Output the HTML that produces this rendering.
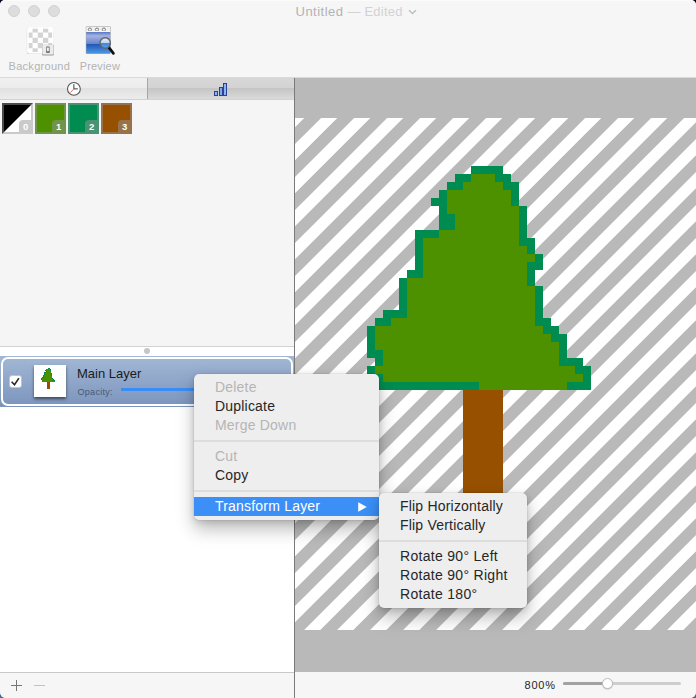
<!DOCTYPE html>
<html lang="en">
<head>
<meta charset="utf-8">
<title>Untitled — Edited</title>
<style>
html,body{margin:0;padding:0;}
body{width:696px;height:698px;overflow:hidden;position:relative;background:linear-gradient(#05051e 0,#05051e 50%,#3f6fa5 50%,#3f6fa5 100%);font-family:"Liberation Sans",Arial,sans-serif;}
#win{position:absolute;left:0;top:0;width:696px;height:698px;background:#f6f6f6;border-radius:5px 5px 6px 6px;overflow:hidden;}
.abs{position:absolute;}
#titlebar{left:0;top:0;width:696px;height:77px;background:linear-gradient(#fbfbfb 0,#fbfbfb 1px,#f6f6f6 1px,#f6f6f6 100%);}
.tl{position:absolute;top:5px;width:12px;height:12px;border-radius:50%;background:#dddddd;border:1px solid #d0d0d0;box-sizing:border-box;}
#title{left:295.5px;top:3.5px;width:200px;height:16px;text-align:left;font-size:13px;line-height:16px;color:#b4b2b4;letter-spacing:0.22px;white-space:nowrap;}
#title .ed{color:#d2d2d2;}
.tblabel{position:absolute;top:59px;font-size:11px;line-height:14px;color:#b3b3b3;letter-spacing:0.3px;white-space:nowrap;}
#tbline{left:0;top:77px;width:696px;height:1px;background:#dadada;}
/* left panel */
#tab1{left:0;top:78px;width:147px;height:21px;background:linear-gradient(#f0f0f0 0,#ececec 48%,#e1e1e1 50%,#ececec 100%);}
#tab2{left:148px;top:78px;width:146px;height:21px;background:linear-gradient(#d7d7d7 0,#d3d3d3 48%,#c5c5c5 50%,#dadada 100%);}
#tabsep{left:147px;top:78px;width:1px;height:21px;background:#a6a6a6;}
#tabline{left:0;top:99px;width:294px;height:1px;background:#d2d2d2;}
#palette{left:0;top:100px;width:294px;height:246px;background:#f5f5f5;}
#palline{left:0;top:346px;width:294px;height:1px;background:#d2d2d2;}
#splitter{left:0;top:347px;width:294px;height:9px;background:#ffffff;}
#splitdot{left:144px;top:348px;width:6px;height:6px;border-radius:50%;background:#c6c6c6;}
.sw{position:absolute;top:103px;width:31px;height:31px;box-sizing:border-box;box-shadow:inset 0 0 0 2px rgba(150,150,150,0.5);overflow:hidden;}
.sw .bd{position:absolute;right:2px;bottom:2px;width:12px;height:12px;background:rgba(150,150,150,0.5);border-top-left-radius:4px;color:#fff;font-size:9.5px;font-weight:bold;line-height:13px;text-align:center;text-indent:1.5px;overflow:visible;white-space:nowrap;}
#layerrow{left:0;top:356px;width:294px;height:51px;background:linear-gradient(#a3b8d6,#7b94bc);}
#ring{left:1px;top:1px;width:292px;height:49px;box-sizing:border-box;border:2px solid #fff;border-radius:7px;}
#chk{left:8.5px;top:18.5px;width:13px;height:13px;box-sizing:border-box;background:#fff;border:1px solid #c9c3bb;border-radius:3px;}
#thumb{left:34px;top:9px;width:32px;height:32px;background:#fff;box-shadow:0 2px 3px rgba(0,0,0,0.55);}
#lname{left:77px;top:10px;font-size:13px;line-height:16px;color:#1b1b1b;white-space:nowrap;letter-spacing:0px;}
#lop{left:77.5px;top:29.7px;font-size:9px;line-height:12px;color:#4a5872;white-space:nowrap;letter-spacing:0.3px;}
#lslider{left:121px;top:32px;width:173px;height:3px;background:#3b8df6;}
#list{left:0;top:407px;width:294px;height:265px;background:#fff;}
#botline{left:0;top:672px;width:294px;height:1px;background:#c9c9c9;}
#botbar{left:0;top:673px;width:696px;height:25px;background:#f6f6f6;}
#divider{left:294px;top:78px;width:1px;height:620px;background:#7a7a7a;}
#scroll{left:295px;top:78px;width:401px;height:594px;background:#b9b9b9;overflow:hidden;}
#zoomtxt{left:524.5px;top:677.5px;font-size:11px;line-height:14px;color:#1e1e1e;letter-spacing:0.8px;white-space:nowrap;}
#track{left:563px;top:682px;width:118px;height:3px;border-radius:1.5px;background:#cecece;}
#trackf{left:563px;top:682px;width:44px;height:3px;border-radius:1.5px;background:#a2a2a2;}
#knob{left:601.5px;top:678px;width:11px;height:11px;border-radius:50%;background:#fff;border:1px solid #bdbdbd;box-sizing:border-box;box-shadow:0 0.5px 1px rgba(0,0,0,0.2);}
/* menus */
.menu{position:absolute;background:#eeeeee;border-radius:5px;box-shadow:0 0 0 0.5px rgba(0,0,0,0.08),0 9px 18px rgba(0,0,0,0.27),0 2px 6px rgba(0,0,0,0.12);padding:4px 0;box-sizing:border-box;font-size:14px;letter-spacing:0.2px;color:#262626;}
.mi{height:19px;line-height:19px;padding-left:21px;white-space:nowrap;position:relative;}
.mi.dis{color:#b5b5b5;}
.mi.rot{letter-spacing:0.3px;}
.mi.hl{background:#3b8ff6;color:#fff;}
.msep{height:12px;position:relative;}
.msep:after{content:"";position:absolute;left:0;right:0;top:5px;height:2px;background:#dddddd;}
</style>
</head>
<body>
<div id="win">
  <div id="titlebar" class="abs">
    <div class="tl" style="left:8px"></div>
    <div class="tl" style="left:28px"></div>
    <div class="tl" style="left:48px"></div>
    <div id="title" class="abs"><span style="letter-spacing:0.5px">Untitled</span> <span class="ed">— Edited</span> <svg width="9" height="6" viewBox="0 0 9 6" style="vertical-align:1px;margin-left:1px"><path d="M1 1.2 L4.5 4.6 L8 1.2" fill="none" stroke="#bdbdbd" stroke-width="1.4"/></svg></div>
    <!-- Background icon -->
    <svg class="abs" style="left:24px;top:24px" width="34" height="34" viewBox="24 24.2 34 34">
      <defs>
        <clipPath id="ckc"><rect x="27.3" y="27.5" width="26.2" height="26.2" rx="2"/></clipPath>
        <linearGradient id="pv1" x1="0" y1="0" x2="0" y2="1">
          <stop offset="0" stop-color="#5877c2"/><stop offset="0.18" stop-color="#a3b3e2"/><stop offset="0.54" stop-color="#6b83cb"/><stop offset="0.56" stop-color="#1f56b2"/><stop offset="1" stop-color="#4f97e6"/>
        </linearGradient>
        <linearGradient id="lens" x1="0" y1="0" x2="0" y2="1">
          <stop offset="0" stop-color="#e9f0fb"/><stop offset="0.5" stop-color="#bcd3f3"/><stop offset="0.55" stop-color="#3f86dd"/><stop offset="1" stop-color="#5aa4ec"/>
        </linearGradient>
      </defs>
      <rect x="26.9" y="27.7" width="26.8" height="26.6" rx="2.3" fill="#adadad" opacity="0.9"/>
      <rect x="27.3" y="27.5" width="26.2" height="26.2" rx="2" fill="#ffffff"/>
      <g clip-path="url(#ckc)" fill="#d3d3d3">
        <rect x="32.54" y="27.5" width="5.24" height="5.24"/><rect x="43.02" y="27.5" width="5.24" height="5.24"/>
        <rect x="27.3" y="32.74" width="5.24" height="5.24"/><rect x="37.78" y="32.74" width="5.24" height="5.24"/><rect x="48.26" y="32.74" width="5.24" height="5.24"/>
        <rect x="32.54" y="37.98" width="5.24" height="5.24"/><rect x="43.02" y="37.98" width="5.24" height="5.24"/>
        <rect x="27.3" y="43.22" width="5.24" height="5.24"/><rect x="37.78" y="43.22" width="5.24" height="5.24"/><rect x="48.26" y="43.22" width="5.24" height="5.24"/>
        <rect x="32.54" y="48.46" width="5.24" height="5.24"/><rect x="43.02" y="48.46" width="5.24" height="5.24"/>
      </g>
      <rect x="28" y="28.2" width="24.8" height="24.8" rx="1.5" fill="none" stroke="#fff" stroke-width="1.5"/>
      <rect x="42" y="45" width="11.8" height="10.6" rx="1" fill="#9a9a9a"/>
      <rect x="42.3" y="45" width="11.2" height="9.6" rx="1" fill="#ececec"/>
      <rect x="46" y="46.4" width="3.8" height="6.8" rx="1.4" fill="#8a8a8a"/>
      <rect x="47" y="47.6" width="1.8" height="4.6" rx="0.8" fill="#f4f4f4"/>
      <rect x="46.4" y="51.4" width="3.2" height="1.6" fill="#6d6d6d"/>
    </svg>
    <!-- Preview icon -->
    <svg class="abs" style="left:82px;top:24px" width="36" height="34" viewBox="82 24 36 34">
      <rect x="85.8" y="26.3" width="24.9" height="27.6" rx="1" fill="#a9aab0"/>
      <rect x="86.3" y="26.8" width="23.9" height="5.2" fill="#f1f1f1"/>
      <rect x="86.3" y="32" width="23.9" height="21.4" fill="url(#pv1)"/>
      <g fill="none" stroke="#6b6b6b" stroke-width="0.9"><circle cx="89.9" cy="29.6" r="1.6"/><circle cx="97" cy="29.6" r="1.6"/><circle cx="103.9" cy="29.6" r="1.6"/></g>
      <rect x="86.3" y="30.8" width="23.9" height="1.2" fill="#f7f7f7"/>
      <line x1="108.8" y1="47.4" x2="113.4" y2="53.4" stroke="#111" stroke-width="2.7" stroke-linecap="round"/>
      <circle cx="105.2" cy="43" r="5.2" fill="url(#lens)" stroke="#666" stroke-width="1.4"/>
    </svg>
    <div class="tblabel" style="left:8.5px">Background</div>
    <div class="tblabel" style="left:79.8px;letter-spacing:0.15px">Preview</div>
  </div>
  <div id="tbline" class="abs"></div>

  <div id="tab1" class="abs"></div>
  <div id="tab2" class="abs"></div>
  <div id="tabsep" class="abs"></div>
  <div id="tabline" class="abs"></div>
  <!-- clock icon -->
  <svg class="abs" style="left:65px;top:80px" width="18" height="18" viewBox="65 80 18 18">
    <circle cx="73.9" cy="88.9" r="6.4" fill="#fff" stroke="#555" stroke-width="1.1"/>
    <path d="M73.9 84.2 V88.9 H77.8" fill="none" stroke="#222" stroke-width="0.9"/>
    <line x1="73.9" y1="88.9" x2="70.4" y2="92.5" stroke="#f05050" stroke-width="0.9"/>
  </svg>
  <!-- bars icon -->
  <svg class="abs" style="left:212px;top:81px" width="18" height="17" viewBox="212 81 18 17" shape-rendering="crispEdges">
    <rect x="214.5" y="91.5" width="3" height="4" fill="#8fb4ec" stroke="#2b409b"/>
    <rect x="219.5" y="87.5" width="3" height="8" fill="#7ea8e8" stroke="#2b409b"/>
    <rect x="223.5" y="83.5" width="3" height="12" fill="#8fb4ec" stroke="#2b409b"/>
  </svg>

  <div id="palette" class="abs"></div>
  <div class="sw" style="left:2px;background:linear-gradient(to bottom right,#000 0,#000 48.8%,#fff 51.2%,#fff 100%)"><div class="bd">0</div></div>
  <div class="sw" style="left:35px;background:#4e9100"><div class="bd">1</div></div>
  <div class="sw" style="left:68px;background:#008c50"><div class="bd">2</div></div>
  <div class="sw" style="left:101px;background:#965000"><div class="bd">3</div></div>
  <div id="palline" class="abs"></div>
  <div id="splitter" class="abs"></div>
  <div id="splitdot" class="abs"></div>

  <div id="layerrow" class="abs">
    <div id="ring" class="abs"></div>
    <div id="chk" class="abs"><svg width="13" height="13" viewBox="0 0 13 13" style="position:absolute;left:-1px;top:-1px"><path d="M2.6 6.8 L5.5 9.8 L9.9 3.1" fill="none" stroke="#262626" stroke-width="1.6"/></svg></div>
    <div id="thumb" class="abs"><svg width="32" height="32" viewBox="0 0 32 32" shape-rendering="crispEdges">
<rect x="13.5" y="3" width="2" height="0.5" fill="#008c50"/>
<rect x="12.5" y="3.5" width="3.5" height="0.5" fill="#008c50"/>
<rect x="13.5" y="3.5" width="1.5" height="0.5" fill="#4e9100"/>
<rect x="12" y="4" width="4.5" height="0.5" fill="#008c50"/>
<rect x="13" y="4" width="2.5" height="0.5" fill="#4e9100"/>
<rect x="11.5" y="4.5" width="5" height="0.5" fill="#008c50"/>
<rect x="12" y="4.5" width="4" height="0.5" fill="#4e9100"/>
<rect x="11" y="5" width="5.5" height="0.5" fill="#008c50"/>
<rect x="12" y="5" width="4" height="0.5" fill="#4e9100"/>
<rect x="11.5" y="5.5" width="5.5" height="0.5" fill="#008c50"/>
<rect x="12" y="5.5" width="4.5" height="0.5" fill="#4e9100"/>
<rect x="11.5" y="6" width="5.5" height="0.5" fill="#008c50"/>
<rect x="12.5" y="6" width="4" height="0.5" fill="#4e9100"/>
<rect x="11.5" y="6.5" width="5.5" height="0.5" fill="#008c50"/>
<rect x="12.5" y="6.5" width="4" height="0.5" fill="#4e9100"/>
<rect x="10" y="7" width="7" height="0.5" fill="#008c50"/>
<rect x="11.5" y="7" width="5" height="0.5" fill="#4e9100"/>
<rect x="10" y="7.5" width="7.5" height="0.5" fill="#008c50"/>
<rect x="10.5" y="7.5" width="6" height="0.5" fill="#4e9100"/>
<rect x="10" y="8" width="7.5" height="0.5" fill="#008c50"/>
<rect x="10.5" y="8" width="6.5" height="0.5" fill="#4e9100"/>
<rect x="10" y="8.5" width="8" height="0.5" fill="#008c50"/>
<rect x="10.5" y="8.5" width="7" height="0.5" fill="#4e9100"/>
<rect x="10" y="9" width="8" height="0.5" fill="#008c50"/>
<rect x="10.5" y="9" width="6.5" height="0.5" fill="#4e9100"/>
<rect x="9.5" y="9.5" width="8" height="0.5" fill="#008c50"/>
<rect x="10.5" y="9.5" width="6.5" height="0.5" fill="#4e9100"/>
<rect x="9" y="10" width="8.5" height="0.5" fill="#008c50"/>
<rect x="9.5" y="10" width="7.5" height="0.5" fill="#4e9100"/>
<rect x="9" y="10.5" width="9" height="0.5" fill="#008c50"/>
<rect x="9.5" y="10.5" width="8" height="0.5" fill="#4e9100"/>
<rect x="9" y="11" width="9" height="0.5" fill="#008c50"/>
<rect x="9.5" y="11" width="8" height="0.5" fill="#4e9100"/>
<rect x="9" y="11.5" width="9" height="0.5" fill="#008c50"/>
<rect x="9.5" y="11.5" width="8" height="0.5" fill="#4e9100"/>
<rect x="8" y="12" width="10" height="0.5" fill="#008c50"/>
<rect x="9.5" y="12" width="8" height="0.5" fill="#4e9100"/>
<rect x="7.5" y="12.5" width="11" height="0.5" fill="#008c50"/>
<rect x="8.5" y="12.5" width="9" height="0.5" fill="#4e9100"/>
<rect x="7" y="13" width="12" height="0.5" fill="#008c50"/>
<rect x="7.5" y="13" width="10.5" height="0.5" fill="#4e9100"/>
<rect x="7" y="13.5" width="12.5" height="0.5" fill="#008c50"/>
<rect x="7.5" y="13.5" width="11" height="0.5" fill="#4e9100"/>
<rect x="7" y="14" width="12.5" height="0.5" fill="#008c50"/>
<rect x="7.5" y="14" width="11.5" height="0.5" fill="#4e9100"/>
<rect x="7" y="14.5" width="12.5" height="0.5" fill="#008c50"/>
<rect x="8" y="14.5" width="11" height="0.5" fill="#4e9100"/>
<rect x="7.5" y="15" width="13" height="0.5" fill="#008c50"/>
<rect x="8" y="15" width="11" height="0.5" fill="#4e9100"/>
<rect x="7" y="15.5" width="14" height="0.5" fill="#008c50"/>
<rect x="7.5" y="15.5" width="12.5" height="0.5" fill="#4e9100"/>
<rect x="7.5" y="16" width="13.5" height="0.5" fill="#008c50"/>
<rect x="8" y="16" width="12.5" height="0.5" fill="#4e9100"/>
<rect x="7.5" y="16.5" width="13.5" height="0.5" fill="#008c50"/>
<rect x="14" y="16.5" width="5.5" height="0.5" fill="#4e9100"/>
<rect x="13" y="17" width="2.5" height="7" fill="#965000"/>
    </svg></div>
    <div id="lname" class="abs">Main Layer</div>
    <div id="lop" class="abs">Opacity:</div>
    <div id="lslider" class="abs"></div>
  </div>
  <div id="list" class="abs"></div>
  <div id="botbar" class="abs"></div>
  <div id="botline" class="abs"></div>
  <svg class="abs" style="left:8px;top:677px" width="42" height="17" viewBox="8 677 42 17" shape-rendering="crispEdges">
    <rect x="16" y="680" width="1" height="11" fill="#767676"/><rect x="11" y="685" width="11" height="1" fill="#767676"/>
    <rect x="34" y="685" width="11" height="1" fill="#c2c2c2"/>
  </svg>

  <div id="scroll" class="abs">
    <svg class="abs" style="left:0;top:40px" width="512" height="512" viewBox="0 0 512 512">
      <rect width="512" height="512" fill="#fff"/>
      <path id="stripes" d="M4.7 -20L-547.3 532M37.7 -20L-514.3 532M70.7 -20L-481.3 532M103.7 -20L-448.3 532M136.7 -20L-415.3 532M169.7 -20L-382.3 532M202.7 -20L-349.3 532M235.7 -20L-316.3 532M268.7 -20L-283.3 532M301.7 -20L-250.3 532M334.7 -20L-217.3 532M367.7 -20L-184.3 532M400.7 -20L-151.3 532M433.7 -20L-118.3 532M466.7 -20L-85.3 532M499.7 -20L-52.3 532M532.7 -20L-19.3 532M565.7 -20L13.7 532M598.7 -20L46.7 532M631.7 -20L79.7 532M664.7 -20L112.7 532M697.7 -20L145.7 532M730.7 -20L178.7 532M763.7 -20L211.7 532M796.7 -20L244.7 532M829.7 -20L277.7 532M862.7 -20L310.7 532M895.7 -20L343.7 532M928.7 -20L376.7 532M961.7 -20L409.7 532M994.7 -20L442.7 532M1027.7 -20L475.7 532M1060.7 -20L508.7 532M1093.7 -20L541.7 532" stroke="#b9b9b9" stroke-width="11.9" fill="none"/>
      <g shape-rendering="crispEdges">
<rect x="176" y="48" width="32" height="8" fill="#008c50"/>
<rect x="160" y="56" width="56" height="8" fill="#008c50"/>
<rect x="176" y="56" width="24" height="8" fill="#4e9100"/>
<rect x="152" y="64" width="72" height="8" fill="#008c50"/>
<rect x="168" y="64" width="40" height="8" fill="#4e9100"/>
<rect x="144" y="72" width="80" height="8" fill="#008c50"/>
<rect x="152" y="72" width="64" height="8" fill="#4e9100"/>
<rect x="136" y="80" width="88" height="8" fill="#008c50"/>
<rect x="152" y="80" width="64" height="8" fill="#4e9100"/>
<rect x="144" y="88" width="88" height="8" fill="#008c50"/>
<rect x="152" y="88" width="72" height="8" fill="#4e9100"/>
<rect x="144" y="96" width="88" height="8" fill="#008c50"/>
<rect x="160" y="96" width="64" height="8" fill="#4e9100"/>
<rect x="144" y="104" width="88" height="8" fill="#008c50"/>
<rect x="160" y="104" width="64" height="8" fill="#4e9100"/>
<rect x="120" y="112" width="112" height="8" fill="#008c50"/>
<rect x="144" y="112" width="80" height="8" fill="#4e9100"/>
<rect x="120" y="120" width="120" height="8" fill="#008c50"/>
<rect x="128" y="120" width="96" height="8" fill="#4e9100"/>
<rect x="120" y="128" width="120" height="8" fill="#008c50"/>
<rect x="128" y="128" width="104" height="8" fill="#4e9100"/>
<rect x="120" y="136" width="128" height="8" fill="#008c50"/>
<rect x="128" y="136" width="112" height="8" fill="#4e9100"/>
<rect x="120" y="144" width="128" height="8" fill="#008c50"/>
<rect x="128" y="144" width="104" height="8" fill="#4e9100"/>
<rect x="112" y="152" width="128" height="8" fill="#008c50"/>
<rect x="128" y="152" width="104" height="8" fill="#4e9100"/>
<rect x="104" y="160" width="136" height="8" fill="#008c50"/>
<rect x="112" y="160" width="120" height="8" fill="#4e9100"/>
<rect x="104" y="168" width="144" height="8" fill="#008c50"/>
<rect x="112" y="168" width="128" height="8" fill="#4e9100"/>
<rect x="104" y="176" width="144" height="8" fill="#008c50"/>
<rect x="112" y="176" width="128" height="8" fill="#4e9100"/>
<rect x="104" y="184" width="144" height="8" fill="#008c50"/>
<rect x="112" y="184" width="128" height="8" fill="#4e9100"/>
<rect x="88" y="192" width="160" height="8" fill="#008c50"/>
<rect x="112" y="192" width="128" height="8" fill="#4e9100"/>
<rect x="80" y="200" width="176" height="8" fill="#008c50"/>
<rect x="96" y="200" width="144" height="8" fill="#4e9100"/>
<rect x="72" y="208" width="192" height="8" fill="#008c50"/>
<rect x="80" y="208" width="168" height="8" fill="#4e9100"/>
<rect x="72" y="216" width="200" height="8" fill="#008c50"/>
<rect x="80" y="216" width="176" height="8" fill="#4e9100"/>
<rect x="72" y="224" width="200" height="8" fill="#008c50"/>
<rect x="80" y="224" width="184" height="8" fill="#4e9100"/>
<rect x="72" y="232" width="200" height="8" fill="#008c50"/>
<rect x="88" y="232" width="176" height="8" fill="#4e9100"/>
<rect x="80" y="240" width="208" height="8" fill="#008c50"/>
<rect x="88" y="240" width="176" height="8" fill="#4e9100"/>
<rect x="72" y="248" width="224" height="8" fill="#008c50"/>
<rect x="80" y="248" width="200" height="8" fill="#4e9100"/>
<rect x="80" y="256" width="216" height="8" fill="#008c50"/>
<rect x="88" y="256" width="200" height="8" fill="#4e9100"/>
<rect x="80" y="264" width="216" height="8" fill="#008c50"/>
<rect x="184" y="264" width="88" height="8" fill="#4e9100"/>
<rect x="168" y="272" width="40" height="112" fill="#965000"/>
      </g>
    </svg>
  </div>
  <div id="divider" class="abs"></div>
  <div id="zoomtxt" class="abs">800%</div>
  <div id="track" class="abs"></div>
  <div id="trackf" class="abs"></div>
  <div id="knob" class="abs"></div>

  <!-- context menu -->
  <div class="menu" style="left:194px;top:374px;width:185px;height:146px;">
    <div class="mi dis">Delete</div>
    <div class="mi">Duplicate</div>
    <div class="mi dis">Merge Down</div>
    <div class="msep"></div>
    <div class="mi dis">Cut</div>
    <div class="mi">Copy</div>
    <div class="msep"></div>
    <div class="mi hl">Transform Layer<svg style="position:absolute;left:163.5px;top:4.5px" width="10" height="10" viewBox="0 0 10 10"><path d="M0.2 0.3 L8.8 5 L0.2 9.7 Z" fill="#fff"/></svg></div>
  </div>
  <div class="menu" style="left:379px;top:493px;width:148px;height:115px;">
    <div class="mi">Flip Horizontally</div>
    <div class="mi">Flip Vertically</div>
    <div class="msep"></div>
    <div class="mi rot">Rotate 90° Left</div>
    <div class="mi rot">Rotate 90° Right</div>
    <div class="mi rot">Rotate 180°</div>
  </div>
</div>
</body>
</html>
